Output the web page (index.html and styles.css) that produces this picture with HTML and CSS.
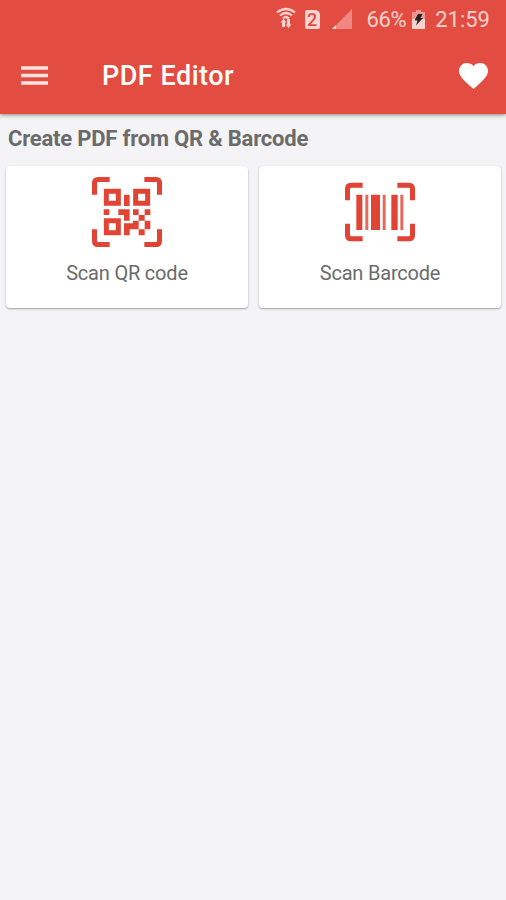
FILE: index.html
```html
<!DOCTYPE html>
<html lang="en">
<head>
  <meta charset="UTF-8">
  <meta name="viewport" content="width=device-width, initial-scale=1.0">
  <title>PDF Editor</title>
  <link rel="stylesheet" href="styles.css">
</head>
<body>
  <header>
    <div class="status-bar">
      <svg class="wifi" width="20" height="22" viewBox="0 0 20 22">
        <path d="M1 5.500Q10 -1.500 19 5.500M4 8.500Q10 3.500 16 8.500M7 11.500Q10 8.500 13 11.500" fill="none" stroke="currentColor" stroke-width="2.200"/>
        <path d="M7.500 13v7M12.500 12v7" stroke="currentColor" stroke-width="3"/>
        <path d="M4.500 15.500l3-3.500 3 3.500zM9.500 17.500l3 3.500 3-3.500z" fill="currentColor"/>
      </svg>
      <span class="sim">2</span>
      <svg class="signal" width="20" height="20" viewBox="0 0 20 20">
        <path d="M0 20L20 0V20z" fill="currentColor" opacity="0.45"/>
        <path d="M0 20L4 16V20z" fill="currentColor"/>
      </svg>
      <span class="percent">66%</span>
      <svg class="battery" width="13" height="19" viewBox="0 0 13 19">
        <path d="M4 0h5v2h4v7H0V2h4z" fill="currentColor" opacity="0.55"/>
        <path d="M0 9h13v10H0z" fill="currentColor"/>
        <path d="M6 4h4.500L8.500 8H11L4 15.500L5.500 10.500H2.500z" fill="#222"/>
      </svg>
      <span class="clock">21:59</span>
    </div>
    <div class="toolbar">
      <svg class="menu" width="27" height="20" viewBox="0 0 27 20">
        <path d="M0 2h27M0 9.500h27M0 17h27" stroke="currentColor" stroke-width="3.400"/>
      </svg>
      <h1>PDF Editor</h1>
      <svg class="heart" width="29" height="26" viewBox="2 3 20 18.350" preserveAspectRatio="none">
        <path d="M12 21.350l-1.450-1.320C5.400 15.360 2 12.280 2 8.500 2 5.420 4.420 3 7.500 3c1.740 0 3.410.81 4.500 2.090C13.090 3.810 14.760 3 16.500 3 19.580 3 22 5.420 22 8.500c0 3.780-3.400 6.860-8.550 11.540L12 21.350z" fill="#fff"/>
      </svg>
    </div>
  </header>
  <main>
    <h2>Create PDF from QR &amp; Barcode</h2>
    <div class="cards">
      <div class="card">
        <svg width="70" height="70" viewBox="0 0 210 210">
          <g fill="none" stroke="currentColor" stroke-width="15">
            <path d="M7.500 53V18Q7.500 7.500 18 7.500H53M157 7.500H192Q202.500 7.500 202.500 18V53M202.500 157V192Q202.500 202.500 192 202.500H157M53 202.500H18Q7.500 202.500 7.500 192V157"/>
            <path d="M43 43h36v36H43zM131 43h36v36h-36zM43 131h36v36H43z"/>
          </g>
          <path d="M96 53h17v34H96zM35 97h17v17H35zM79 97h34v34H96v-17H79zM123 97h17v17h-17zM158 97h17v17h-17zM140 114h18v17h-18zM123 131h17v26h-27v18H96v-36h27zM158 131h17v26h-17zM140 157h18v18h-18z" fill="currentColor"/>
        </svg>
        <span>Scan QR code</span>
      </div>
      <div class="card">
        <svg width="70" height="70" viewBox="0 0 210 210">
          <path d="M7.500 70V35Q7.500 24.500 18 24.500H53M157 24.500H192Q202.500 24.500 202.500 35V70M202.500 140V175Q202.500 185.500 192 185.500H157M53 185.500H18Q7.500 185.500 7.500 175V140" fill="none" stroke="currentColor" stroke-width="15"/>
          <path d="M34 53h18v106H34zM78 53h27v106H78zM139 53h19v106h-19z" fill="currentColor"/>
          <path d="M61 53h9v106h-9zM113 53h9v106h-9zM166 53h9v106h-9z" fill="currentColor" opacity="0.8"/>
        </svg>
        <span>Scan Barcode</span>
      </div>
    </div>
  </main>
</body>
</html>
```
FILE: styles.css
```css
body {
  margin: 0;
  min-height: 100vh;
  background-color: #f4f4f6;
  font-family: Roboto, sans-serif;
  color: #6b6b6b;
}
header {
  height: 114px;
  background-color: #e34c40;
  color: #fcd3ce;
  box-shadow: 0 1px 4px rgba(0, 0, 0, 0.45);
}
.status-bar {
  display: flex;
  align-items: center;
  justify-content: flex-end;
  height: 38px;
  padding-right: 16px;
  font-size: 22px;
}
.wifi {
  margin-top: -2px;
}
.sim {
  width: 15px;
  height: 19px;
  margin-left: 9px;
  border-radius: 2px 5px 2px 2px;
  background-color: #fcd3ce;
  color: #e34c40;
  font-size: 18px;
  font-weight: 500;
  line-height: 20px;
  text-align: center;
}
.signal {
  margin-left: 12px;
}
.percent {
  margin-left: 15px;
  letter-spacing: -0.4px;
}
.battery {
  margin-left: 6px;
}
.clock {
  margin-left: 10px;
}
.toolbar {
  display: flex;
  align-items: center;
  height: 76px;
  padding: 0 18px 0 21px;
}
.menu {
  color: #fde3e0;
}
h1 {
  flex: 1;
  margin: 0 0 0 54px;
  color: #fff;
  font-size: 27px;
  font-weight: 500;
  letter-spacing: 0.5px;
}
h2 {
  height: 52px;
  margin: 0 0 0 8px;
  font-size: 22px;
  font-weight: 700;
  letter-spacing: -0.2px;
  line-height: 49px;
}
.cards {
  display: flex;
  gap: 11px;
  padding: 0 5px 0 6px;
}
.card {
  display: flex;
  flex: 1;
  flex-direction: column;
  align-items: center;
  box-sizing: border-box;
  height: 142px;
  padding-top: 11px;
  border-radius: 4px;
  background-color: #fff;
  box-shadow: 0 1px 2px rgba(0, 0, 0, 0.35);
}
.card svg {
  color: #e14335;
}
.card span {
  margin-top: 14px;
  font-size: 20px;
  letter-spacing: -0.2px;
  line-height: 24px;
}
```
